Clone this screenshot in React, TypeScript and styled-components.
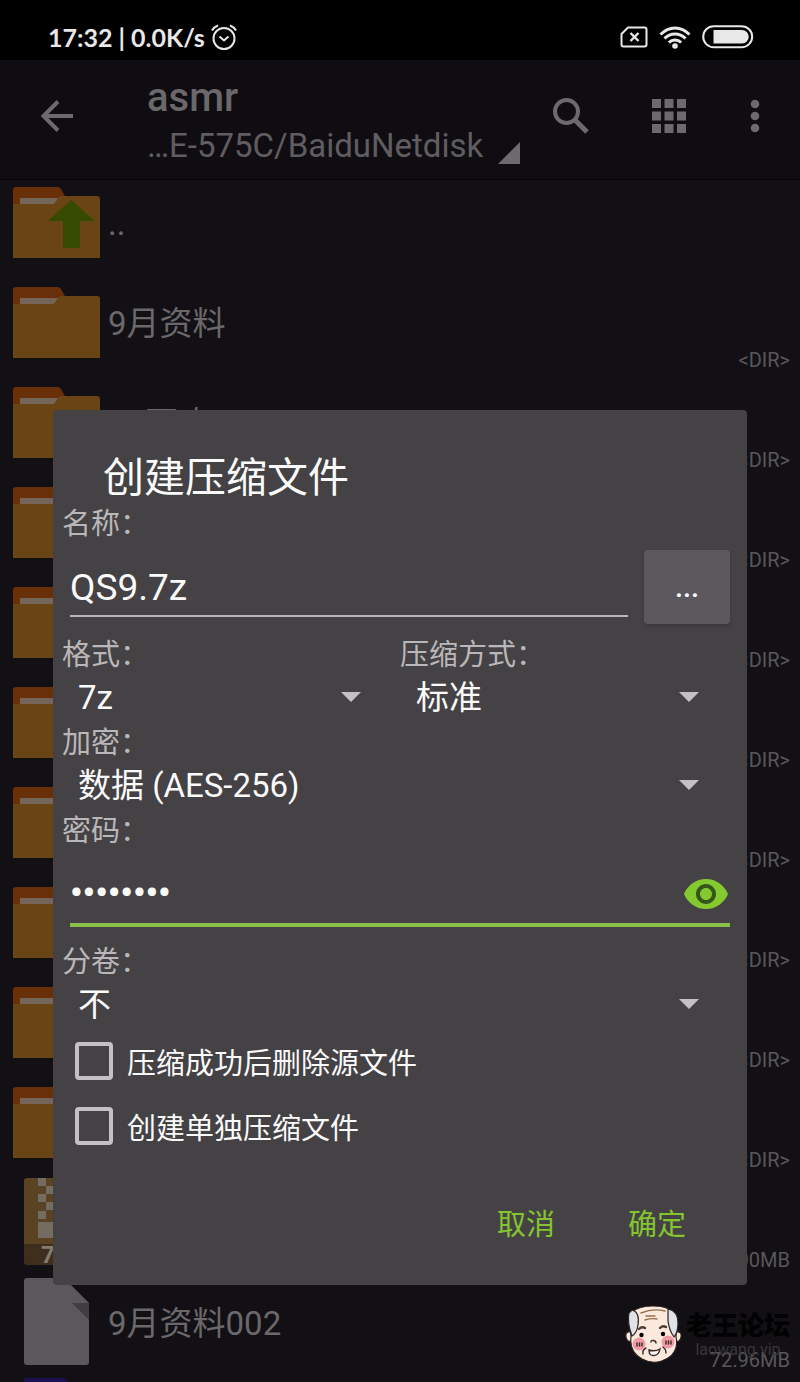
import React from "react";
import styled, { createGlobalStyle } from "styled-components";

const Global = createGlobalStyle`
  *, *::before, *::after { box-sizing: border-box; }
  body { margin: 0; background: #121014; }
  body, button, input, select {
    font-family: Roboto, "Noto Sans CJK SC", sans-serif;
  }
`;

const Screen = styled.div`
  position: relative;
  height: 100vh;
  display: flex;
  flex-direction: column;
  overflow: hidden;
  background: #121014;
  color: #6a686b;
`;

const StatusBar = styled.header`
  flex: none;
  height: 60px;
  padding: 13px 46px 0 48px;
  display: flex;
  align-items: center;
  justify-content: space-between;
  background: #000;
  color: #e9e8e9;
`;

const StatusText = styled.div`
  display: flex;
  align-items: center;
  gap: 6px;
  font: 700 25px/32px Lato, sans-serif;
`;

const StatusIcons = styled.div`
  display: flex;
  align-items: center;
  gap: 11px;
`;

const AppBar = styled.div`
  flex: none;
  height: 120px;
  padding: 0 33px 8px 32px;
  display: flex;
  align-items: center;
  background: #0f0d11;
  border-bottom: 1px solid #060506;
`;

const IconButton = styled.button<{ $w: number }>`
  flex: none;
  width: ${(p) => p.$w}px;
  height: 48px;
  padding: 0;
  border: 0;
  background: none;
  color: #6c6a6d;
  display: flex;
  align-items: center;
  justify-content: center;
`;

const Heading = styled.div`
  flex: 1;
  min-width: 0;
  padding: 12px 0 0 65px;
`;

const Title = styled.h1`
  margin: 0;
  font-size: 40px;
  font-weight: 500;
  line-height: 48px;
`;

const Path = styled.div`
  display: flex;
  align-items: flex-end;
  gap: 15px;
  font-size: 33px;
  line-height: 48px;
  white-space: nowrap;
  color: #5f5d60;

  > svg { margin-bottom: 6px; }
`;

const Actions = styled.div`
  display: flex;
  gap: 50px;
`;

const FileList = styled.ul`
  flex: 1;
  min-height: 0;
  overflow: hidden;
  margin: 0;
  padding: 0;
  list-style: none;
`;

const FileRow = styled.li`
  height: 100px;
  padding: 0 10px 8px 12px;
  display: flex;
`;

const FileIcon = styled.div`
  flex: none;
  width: 96px;
  height: 86px;

  > svg {
    display: block;
    overflow: visible;
  }
`;

const FileName = styled.span`
  flex: 1;
  font-size: 33px;
  line-height: 88px;
`;

const FileInfo = styled.span`
  align-self: flex-end;
  font-size: 20px;
  line-height: 24px;
  color: #59575a;
`;

const Scrim = styled.div`
  position: absolute;
  inset: 0;
  padding: 0 53px 97px;
  display: flex;
  align-items: flex-end;
`;

const Dialog = styled.form`
  width: 100%;
  padding: 44px 9px 27px;
  border-radius: 4px;
  background: #444244;
  color: #fbfafb;
`;

const DialogTitle = styled.h2`
  margin: 0;
  padding-left: 41px;
  font-size: 41px;
  font-weight: 400;
  line-height: 48px;
`;

const Label = styled.label`
  display: block;
  font-size: 29px;
  line-height: 44px;
  color: #b9b7b9;
`;

const FieldRow = styled.div`
  height: 87px;
  padding: 0 8px;
  display: flex;
  align-items: flex-start;
  gap: 16px;
`;

const Underline = styled.div<{ $active?: boolean }>`
  flex: 1;
  min-width: 0;
  height: ${(p) => (p.$active ? 74 : 71)}px;
  padding-top: ${(p) => (p.$active ? 12 : 14)}px;
  display: flex;
  align-items: center;
  border-bottom: ${(p) => (p.$active ? "4px solid #8abf4c" : "2px solid #b9b7b9")};
`;

const TextInput = styled.input`
  flex: 1;
  min-width: 0;
  padding: 0;
  border: 0;
  outline: 0;
  background: none;
  color: inherit;
  font-size: 37px;
  line-height: 44px;

  &[type="password"] {
    font-size: 35px;
    font-weight: 700;
  }
`;

const BrowseButton = styled.button`
  width: 86px;
  height: 74px;
  margin-top: 4px;
  border: 0;
  border-radius: 4px;
  background: #5b595e;
  box-shadow: 0 2px 3px #3a383a;
  color: inherit;
  font-size: 29px;
  font-weight: 500;
`;

const Columns = styled.div`
  display: grid;
  grid-template-columns: 1fr 1fr;
`;

const SelectBox = styled.div`
  display: grid;
  align-items: center;
  padding-bottom: 4px;

  > * { grid-area: 1 / 1; }

  > svg {
    justify-self: end;
    margin-right: 38px;
    pointer-events: none;
  }
`;

const Select = styled.select`
  appearance: none;
  width: 100%;
  height: 40px;
  padding: 2px 64px 0 16px;
  border: 0;
  background: none;
  color: inherit;
  font-size: 33px;
  line-height: 38px;
`;

const CheckRow = styled.label`
  height: 65px;
  padding-left: 13px;
  display: flex;
  align-items: center;
  gap: 14px;
  font-size: 29px;
`;

const CheckBox = styled.input`
  appearance: none;
  flex: none;
  width: 38px;
  height: 38px;
  margin: 0;
  border: 4px solid #c3c1c4;
  border-radius: 4px;
`;

const ButtonBar = styled.div`
  margin-top: 28px;
  padding-right: 35px;
  display: flex;
  justify-content: flex-end;
  gap: 39px;
`;

const TextButton = styled.button`
  height: 72px;
  padding: 0 17px;
  border: 0;
  background: none;
  color: #84c52f;
  font-size: 29px;
`;

const Watermark = styled.div`
  position: absolute;
  right: 10px;
  bottom: 17px;
  display: flex;
  align-items: center;
  gap: 3px;
`;

const WatermarkText = styled.div`
  display: flex;
  flex-direction: column;
  align-items: center;
  color: #38363a;
  font-size: 16px;
  line-height: 18px;

  strong {
    color: #020202;
    font-size: 26px;
    font-weight: 900;
    line-height: 30px;
  }
`;

const AlarmIcon = () => (
  <svg width="26" height="26" viewBox="0 0 26 26" fill="none" stroke="currentColor" strokeWidth="2">
    <circle cx="13" cy="14.500" r="10.500" />
    <path d="M8.500 12.500l4.500 4 4.500-4" />
    <path d="M1 6.500Q3 3 7 1.500M25 6.500Q23 3 19 1.500" />
  </svg>
);

const SimIcon = () => (
  <svg width="28" height="22" viewBox="0 0 28 22" fill="none" stroke="currentColor" strokeWidth="2">
    <path d="M8 1.500H24.500Q26.500 1.500 26.500 3.500V18.500Q26.500 20.500 24.500 20.500H3.500Q1.500 20.500 1.500 18.500V8z" />
    <path d="M10.500 7l8 8M18.500 7l-8 8" strokeWidth="2.400" />
  </svg>
);

const WifiIcon = () => (
  <svg width="32" height="24" viewBox="0 0 32 24" fill="none" stroke="currentColor" strokeWidth="3">
    <path d="M1.500 9.500Q8 3 16 3T30.500 9.500" />
    <path d="M5.500 13.500Q10 9 16 9T26.500 13.500" />
    <path d="M9.800 17.500Q12.500 15 16 15T22.200 17.500" />
    <circle cx="16" cy="21" r="2.800" fill="currentColor" stroke="none" />
  </svg>
);

const BatteryIcon = () => (
  <svg width="52" height="24" viewBox="0 0 52 24">
    <rect x="1.200" y="1.200" width="49" height="21" rx="10.500" fill="none" stroke="currentColor" strokeWidth="2" />
    <path d="M11.500 5H40a6.700 6.700 0 0 1 0 13.500H11.500z" fill="currentColor" />
  </svg>
);

const BackIcon = () => (
  <svg width="34" height="32" viewBox="0 0 34 32" fill="none" stroke="currentColor" strokeWidth="4">
    <path d="M33 16H4M18 1.500L3.500 16 18 30.500" />
  </svg>
);

const SearchIcon = () => (
  <svg width="36" height="36" viewBox="0 0 36 36" fill="none" stroke="currentColor">
    <circle cx="13.500" cy="13.500" r="11.500" strokeWidth="4" />
    <path d="M22.500 22.500L34 34" strokeWidth="5" />
  </svg>
);

const GridIcon = () => (
  <svg width="34" height="34" viewBox="0 0 34 34" fill="currentColor">
    {[0, 12.5, 25].map((y) => [0, 12.5, 25].map((x) => <rect key={`${x}-${y}`} x={x} y={y} width="9" height="9" />))}
  </svg>
);

const MoreIcon = () => (
  <svg width="10" height="34" viewBox="0 0 10 34" fill="currentColor">
    <circle cx="5" cy="5" r="4.300" />
    <circle cx="5" cy="17" r="4.300" />
    <circle cx="5" cy="29" r="4.300" />
  </svg>
);

const CornerIcon = () => (
  <svg width="22" height="22" viewBox="0 0 22 22">
    <path d="M22 0V22H0z" fill="#6c6a6d" />
  </svg>
);

const ArrowIcon = () => (
  <svg width="22" height="12" viewBox="0 0 22 12">
    <path d="M1 1H21L11 11z" fill="#c3c1c4" />
  </svg>
);

const EyeIcon = () => (
  <svg width="48" height="48" viewBox="0 0 24 24">
    <circle cx="12" cy="12" r="6" fill="#34561a" />
    <path
      fill="#84c92f"
      d="M12 4.500C7 4.500 2.730 7.610 1 12c1.730 4.390 6 7.500 11 7.500s9.270-3.110 11-7.500c-1.730-4.390-6-7.500-11-7.500zM12 17c-2.760 0-5-2.240-5-5s2.240-5 5-5 5 2.240 5 5-2.240 5-5 5zm0-8c-1.660 0-3 1.340-3 3s1.340 3 3 3 3-1.340 3-3-1.340-3-3-3z"
    />
  </svg>
);

const FolderIcon = ({ up = false }: { up?: boolean }) => (
  <svg width="96" height="86" viewBox="0 0 96 86">
    <path d="M1 60V10Q1 7 4 7H45Q48 7 49 9L54 18V40H1z" fill="#682f08" />
    <path d="M8 18H46V28H8z" fill="#756558" />
    <path d="M1 78V24H41Q43 24 44 21T48 16H85Q88 16 88 19V78z" fill="#694414" />
    {up && <path d="M59 20L83 41H68V68H51V41H36z" fill="#364a02" />}
  </svg>
);

const ArchiveIcon = () => (
  <svg width="96" height="86" viewBox="0 0 96 86">
    <path d="M12 1Q12 -2 15 -2H75Q78 -2 78 1V64H12z" fill="#594322" />
    <path d="M12 64H78V82Q78 85 75 85H15Q12 85 12 82z" fill="#3f2e1c" />
    <path d="M26 -2h8v8h-8zM34 6h8v8h-8zM26 14h8v8h-8zM34 22h8v8h-8zM26 31h8v8h-8zM26 42h16v16h-16z" fill="#756c61" />
    <text x="29" y="83" fontSize="24" fontWeight="700" fill="#857b70">7Z</text>
  </svg>
);

const DocumentIcon = () => (
  <svg width="96" height="86" viewBox="0 0 96 86">
    <path d="M12 1Q12 -2 15 -2H52L77 23V82Q77 85 74 85H15Q12 85 12 82z" fill="#5a585a" />
    <path d="M60 23H77V40z" fill="#3f3d3f" />
  </svg>
);

const MediaIcon = () => (
  <svg width="96" height="86" viewBox="0 0 96 86">
    <path d="M12 1Q12 -2 15 -2H52L77 23V85H12z" fill="#1a1052" />
  </svg>
);

const FaceIcon = () => (
  <svg width="58" height="60" viewBox="0 0 58 60" strokeLinecap="round">
    <g fill="#fbe9dd" stroke="#2c2320" strokeWidth="1.200">
      <path d="M6 27Q0 26 1 32T8 36zM51 27Q57 26 56 32T49 36z" />
      <path d="M7 7Q14 1 28 1T48 7Q52 18 51 32Q54 46 43 53Q30 61 17 54Q4 47 6 32Q5 18 7 7z" />
      <path d="M7 5Q15 7 13 20Q12 28 7 31Q2 18 4 8zM43 4Q53 6 53 18Q53 27 49 32Q44 25 43 16z" fill="#dfe3e8" />
    </g>
    <circle cx="14" cy="39" r="6.500" fill="#ef9aa5" />
    <circle cx="43" cy="37" r="6.500" fill="#ef9aa5" />
    <g fill="none" stroke="#3a2925" strokeWidth="1.400">
      <path d="M12 38v3M14.500 38v3M17 38v3M41 36v3M43.500 36v3M46 36v3" />
      <path d="M26 37Q26 35 28.500 35.500T31 38M21 43Q17 45 18 49M38 42Q41 44 41 48" />
      <path d="M24 45Q30 47 35 44Q34 50 29 50.500T24 45z" fill="#fff" />
    </g>
    <path d="M16 8Q28 3 40 6M21 11H30M20 15Q26 13 32 14" fill="none" stroke="#96704f" strokeWidth="1.400" />
    <path d="M14 24Q17 21 20 23M35 23Q38 20 41 22" fill="none" stroke="#4a3b36" strokeWidth="2.400" />
    <circle cx="16.500" cy="30" r="2.200" />
    <circle cx="38" cy="29" r="2.200" />
  </svg>
);

type Entry = { icon: React.ReactNode; name?: string; info?: string };

const folders: Entry[] = Array.from({ length: 7 }, () => ({ icon: <FolderIcon />, info: "<DIR>" }));

const entries: Entry[] = [
  { icon: <FolderIcon up />, name: ".." },
  { icon: <FolderIcon />, name: "9月资料", info: "<DIR>" },
  { icon: <FolderIcon />, name: "10耳吹", info: "<DIR>" },
  ...folders,
  { icon: <ArchiveIcon />, info: "72.00MB" },
  { icon: <DocumentIcon />, name: "9月资料002", info: "72.96MB" },
  { icon: <MediaIcon /> },
];

type DropDownProps = { id: string; label: string; value: string };

const DropDown = ({ id, label, value }: DropDownProps) => (
  <div>
    <Label htmlFor={id}>{label}</Label>
    <SelectBox>
      <Select id={id} defaultValue={value}>
        <option>{value}</option>
      </Select>
      <ArrowIcon />
    </SelectBox>
  </div>
);

export default function App() {
  return (
    <Screen>
      <Global />
      <StatusBar>
        <StatusText>
          17:32 | 0.0K/s
          <AlarmIcon />
        </StatusText>
        <StatusIcons>
          <SimIcon />
          <WifiIcon />
          <BatteryIcon />
        </StatusIcons>
      </StatusBar>
      <AppBar>
        <IconButton $w={50} aria-label="返回"><BackIcon /></IconButton>
        <Heading>
          <Title>asmr</Title>
          <Path>
            …E-575C/BaiduNetdisk
            <CornerIcon />
          </Path>
        </Heading>
        <Actions>
          <IconButton $w={48} aria-label="搜索"><SearchIcon /></IconButton>
          <IconButton $w={48} aria-label="视图"><GridIcon /></IconButton>
          <IconButton $w={24} aria-label="更多"><MoreIcon /></IconButton>
        </Actions>
      </AppBar>
      <FileList>
        {entries.map((entry, i) => (
          <FileRow key={i}>
            <FileIcon>{entry.icon}</FileIcon>
            <FileName>{entry.name}</FileName>
            <FileInfo>{entry.info}</FileInfo>
          </FileRow>
        ))}
      </FileList>
      <Scrim>
        <Dialog role="dialog" aria-labelledby="dialog-title" onSubmit={(e) => e.preventDefault()}>
          <DialogTitle id="dialog-title">创建压缩文件</DialogTitle>
          <Label htmlFor="name">名称：</Label>
          <FieldRow>
            <Underline>
              <TextInput id="name" type="text" defaultValue="QS9.7z" />
            </Underline>
            <BrowseButton type="button">...</BrowseButton>
          </FieldRow>
          <Columns>
            <DropDown id="format" label="格式：" value="7z" />
            <DropDown id="level" label="压缩方式：" value="标准" />
          </Columns>
          <DropDown id="encryption" label="加密：" value="数据 (AES-256)" />
          <Label htmlFor="password">密码：</Label>
          <FieldRow>
            <Underline $active>
              <TextInput id="password" type="password" defaultValue="asmr2020" />
              <IconButton $w={48} type="button" aria-label="显示密码"><EyeIcon /></IconButton>
            </Underline>
          </FieldRow>
          <DropDown id="volume" label="分卷：" value="不" />
          <CheckRow>
            <CheckBox type="checkbox" />
            压缩成功后删除源文件
          </CheckRow>
          <CheckRow>
            <CheckBox type="checkbox" />
            创建单独压缩文件
          </CheckRow>
          <ButtonBar>
            <TextButton type="button">取消</TextButton>
            <TextButton type="submit">确定</TextButton>
          </ButtonBar>
        </Dialog>
      </Scrim>
      <Watermark>
        <FaceIcon />
        <WatermarkText>
          <strong>老王论坛</strong>
          laowang.vip
        </WatermarkText>
      </Watermark>
    </Screen>
  );
}
